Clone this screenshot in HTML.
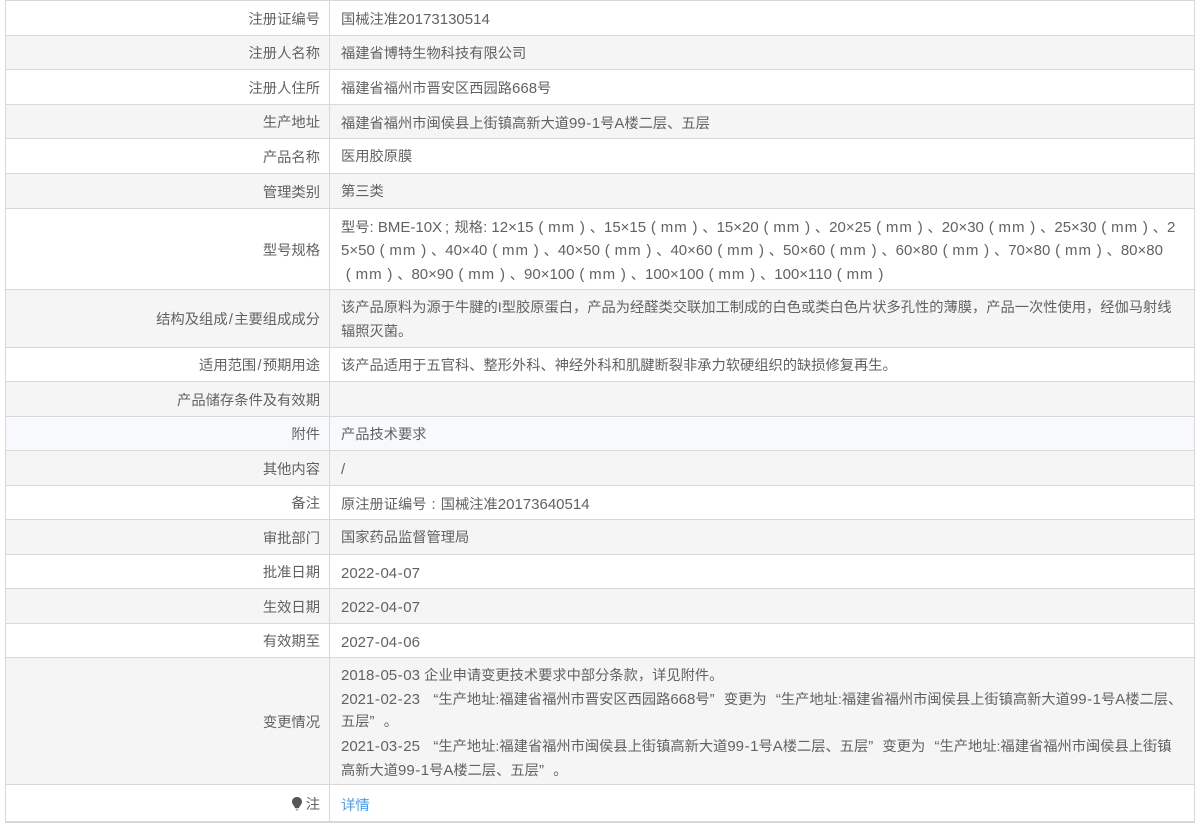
<!DOCTYPE html>
<html lang="zh">
<head>
<meta charset="utf-8">
<title>注册证</title>
<style>
html,body{margin:0;padding:0;background:#fff;width:1200px;height:827px;overflow:hidden}
body{position:relative;font-family:"Liberation Sans","Noto Sans CJK SC",sans-serif;font-size:14.25px;color:#626262;filter:blur(.3px)}
#t{position:absolute;left:5px;top:0;width:1190px;height:823px;box-sizing:border-box;border:1px solid #d8d8d8;border-width:1.5px 1px 2px 1px}
.r{position:absolute;left:5px;width:1190px;box-sizing:border-box;border-bottom:1px solid #d8d8d8}
.g{background:#f5f5f5}
.h{background:#f8f9fc}
.l{position:absolute;left:1px;width:314px;top:0;bottom:0;box-sizing:border-box;padding-top:3px;display:flex;align-items:center;justify-content:flex-end;white-space:nowrap;line-height:24px;font-size:14.3px}
.v{position:absolute;left:324px;top:0;bottom:0;box-sizing:border-box;border-left:1px solid #d8d8d8;padding:4.5px 0 0 11px;width:860px;display:flex;flex-direction:column;justify-content:center;white-space:nowrap;line-height:23.6px}
.v>div{height:23.6px;flex:none}
i{font-style:normal;font-size:15px}
u{text-decoration:none;font-size:15px;padding:0 .55px}
b{display:inline-block;font-weight:normal;font-size:15px;width:14.6px;text-align:center;line-height:1}
em{font-style:normal;font-size:15px;letter-spacing:1px}
.c{width:14.25px}
.ql{display:inline-block;width:14.25px;text-align:right;font-size:15px;line-height:1}
.qr{display:inline-block;width:14.25px;text-align:left;font-size:15px;line-height:1}
.sl{display:inline-block;width:6.6px;text-align:center}
a{color:#4a9dfa;text-decoration:none;font-size:14.4px;position:relative;top:1.5px}
</style>
</head>
<body>
<div class="r" style="top:1px;height:35px"><div class="l">注册证编号</div><div class="v"><div>国械注准<i>20173130514</i></div></div></div>
<div class="r g" style="top:36px;height:34px"><div class="l">注册人名称</div><div class="v"><div>福建省博特生物科技有限公司</div></div></div>
<div class="r" style="top:70px;height:35px"><div class="l">注册人住所</div><div class="v"><div>福建省福州市晋安区西园路<i>668</i>号</div></div></div>
<div class="r g" style="top:105px;height:34px"><div class="l">生产地址</div><div class="v"><div>福建省福州市闽侯县上街镇高新大道<i>99</i><u>-</u><i>1</i>号<i>A</i>楼二层、五层</div></div></div>
<div class="r" style="top:139px;height:35px"><div class="l">产品名称</div><div class="v"><div>医用胶原膜</div></div></div>
<div class="r g" style="top:174px;height:35px"><div class="l">管理类别</div><div class="v"><div>第三类</div></div></div>
<div class="r" style="top:209px;height:81px"><div class="l">型号规格</div><div class="v">
<div>型号<i>: BME-10X</i><b style="width:12.5px;text-align:left;padding-left:3px;box-sizing:border-box">;</b>规格<i>: 12×15</i><b>(</b><em>mm</em><b>)</b>、<i>15×15</i><b>(</b><em>mm</em><b>)</b>、<i>15×20</i><b>(</b><em>mm</em><b>)</b>、<i>20×25</i><b>(</b><em>mm</em><b>)</b>、<i>20×30</i><b>(</b><em>mm</em><b>)</b>、<i>25×30</i><b>(</b><em>mm</em><b>)</b>、<i>2</i></div>
<div><i>5×50</i><b>(</b><em>mm</em><b>)</b>、<i>40×40</i><b>(</b><em>mm</em><b>)</b>、<i>40×50</i><b>(</b><em>mm</em><b>)</b>、<i>40×60</i><b>(</b><em>mm</em><b>)</b>、<i>50×60</i><b>(</b><em>mm</em><b>)</b>、<i>60×80</i><b>(</b><em>mm</em><b>)</b>、<i>70×80</i><b>(</b><em>mm</em><b>)</b>、<i>80×80</i></div>
<div><b>(</b><em>mm</em><b>)</b>、<i>80×90</i><b>(</b><em>mm</em><b>)</b>、<i>90×100</i><b>(</b><em>mm</em><b>)</b>、<i>100×100</i><b>(</b><em>mm</em><b>)</b>、<i>100×110</i><b>(</b><em>mm</em><b>)</b></div>
</div></div>
<div class="r g" style="top:290px;height:58px"><div class="l"><span>结构及组成<span class="sl">/</span>主要组成成分</span></div><div class="v"><div>该产品原料为源于牛腱的I型胶原蛋白，产品为经醛类交联加工制成的白色或类白色片状多孔性的薄膜，产品一次性使用，经伽马射线</div><div>辐照灭菌。</div></div></div>
<div class="r" style="top:348px;height:34px"><div class="l"><span>适用范围<span class="sl">/</span>预期用途</span></div><div class="v"><div>该产品适用于五官科、整形外科、神经外科和肌腱断裂非承力软硬组织的缺损修复再生。</div></div></div>
<div class="r g" style="top:382px;height:35px"><div class="l">产品储存条件及有效期</div><div class="v"></div></div>
<div class="r h" style="top:417px;height:34px"><div class="l">附件</div><div class="v"><div>产品技术要求</div></div></div>
<div class="r g" style="top:451px;height:35px"><div class="l">其他内容</div><div class="v"><div><i>/</i></div></div></div>
<div class="r" style="top:486px;height:34px"><div class="l">备注</div><div class="v"><div>原注册证编号<b class="c">:</b>国械注准<i>20173640514</i></div></div></div>
<div class="r g" style="top:520px;height:35px"><div class="l">审批部门</div><div class="v"><div>国家药品监督管理局</div></div></div>
<div class="r" style="top:555px;height:34px"><div class="l">批准日期</div><div class="v"><div><i>2022</i><u>-</u><i>04</i><u>-</u><i>07</i></div></div></div>
<div class="r g" style="top:589px;height:35px"><div class="l">生效日期</div><div class="v"><div><i>2022</i><u>-</u><i>04</i><u>-</u><i>07</i></div></div></div>
<div class="r" style="top:624px;height:34px"><div class="l">有效期至</div><div class="v"><div><i>2027</i><u>-</u><i>04</i><u>-</u><i>06</i></div></div></div>
<div class="r g" style="top:658px;height:127px"><div class="l">变更情况</div><div class="v">
<div><i>2018</i><u>-</u><i>05</i><u>-</u><i>03 </i>企业申请变更技术要求中部分条款，详见附件。</div>
<div><i>2021</i><u>-</u><i>02</i><u>-</u><i>23 </i><span class="ql">“</span>生产地址:福建省福州市晋安区西园路<i>668</i>号<span class="qr">”</span>变更为<span class="ql">“</span>生产地址:福建省福州市闽侯县上街镇高新大道<i>99</i><u>-</u><i>1</i>号<i>A</i>楼二层、</div>
<div>五层<span class="qr">”</span>。</div>
<div><i>2021</i><u>-</u><i>03</i><u>-</u><i>25 </i><span class="ql">“</span>生产地址:福建省福州市闽侯县上街镇高新大道<i>99</i><u>-</u><i>1</i>号<i>A</i>楼二层、五层<span class="qr">”</span>变更为<span class="ql">“</span>生产地址:福建省福州市闽侯县上街镇</div>
<div>高新大道<i>99</i><u>-</u><i>1</i>号<i>A</i>楼二层、五层<span class="qr">”</span>。</div>
</div></div>
<div class="r" style="top:785px;height:37px;border-bottom:0"><div class="l"><svg width="12" height="15" viewBox="0 0 12 15" style="margin-right:3px;position:relative;top:-1.5px"><path d="M6 1C3.200 1 1 3 1 5.800c0 2.600 2.600 4.400 3 6.200h4c.4-1.800 3-3.600 3-6.200C11 3 8.800 1 6 1z" fill="#555"/><path d="M4.500 12.500h3v1L6.800 14.500H5.200L4.500 13.500z" fill="#aaa"/></svg>注</div><div class="v"><div><a href="#">详情</a></div></div></div>
<div id="t"></div>
</body>
</html>
